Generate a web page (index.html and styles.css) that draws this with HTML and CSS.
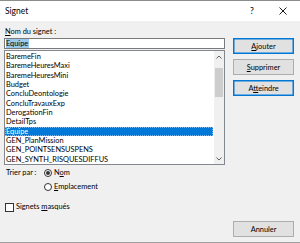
FILE: index.html
```html
<!DOCTYPE html>
<html lang="fr">
<head>
  <meta charset="UTF-8">
  <title>Signet</title>
  <link rel="stylesheet" href="styles.css">
</head>
<body>

  <div class="dialog">
    <div class="titlebar">
      <span class="title">Signet</span>
      <span class="help">?</span>
      <span class="close">
        <svg width="8" height="8" viewBox="0 0 8 8"><path d="M0.5 0.5L7.5 7.5M7.5 0.5L0.5 7.5" stroke="#000" stroke-width="0.9" fill="none"/></svg>
      </span>
    </div>

    <div class="content">
      <!-- Colonne gauche -->
      <div class="main">
        <div class="field-label"><u>N</u>om du signet :</div>
        <div class="name-input"><span class="sel">Equipe</span></div>

        <div class="listbox">
          <ul class="items">
            <li>BaremeFin</li>
            <li>BaremeHeuresMaxi</li>
            <li>BaremeHeuresMini</li>
            <li>Budget</li>
            <li>ConcluDeontologie</li>
            <li>ConcluTravauxExp</li>
            <li>DerogationFin</li>
            <li>DetailTps</li>
            <li class="selected">Equipe</li>
            <li>GEN_PlanMission</li>
            <li>GEN_POINTSENSUSPENS</li>
            <li>GEN_SYNTH_RISQUESDIFFUS</li>
          </ul>
          <div class="scrollbar">
            <span class="arrow">
              <svg width="6" height="4" viewBox="0 0 6 4"><path d="M0.5 3.5L3 1L5.5 3.5" stroke="#606060" stroke-width="1" fill="none"/></svg>
            </span>
            <span class="track"><span class="thumb"></span></span>
            <span class="arrow">
              <svg width="6" height="4" viewBox="0 0 6 4"><path d="M0.5 0.5L3 3L5.5 0.5" stroke="#606060" stroke-width="1" fill="none"/></svg>
            </span>
          </div>
        </div>

        <div class="sort">
          <span class="sort-label">Trier par :</span>
          <div class="radios">
            <div class="radio"><span class="dot checked"></span><span>N<u>o</u>m</span></div>
            <div class="radio"><span class="dot"></span><span><u>E</u>mplacement</span></div>
          </div>
        </div>

        <div class="check"><span class="box"></span><span>Signets <u>m</u>asqués</span></div>
      </div>

      <!-- Boutons -->
      <div class="actions">
        <button class="btn default"><u>A</u>jouter</button>
        <button class="btn"><u>S</u>upprimer</button>
        <button class="btn default">A<u>t</u>teindre</button>
        <button class="btn cancel">Annuler</button>
      </div>
    </div>
  </div>

</body>
</html>
```

FILE: styles.css
```css
* {
  margin: 0;
  padding: 0;
  box-sizing: border-box;
}

body {
  width: 300px;
  height: 243px;
  overflow: hidden;
  background: #f0f0f0;
  font-family: 'Lato', 'Noto Sans', sans-serif;
  font-size: 7.4px;
  color: #000;
}

u {
  text-decoration-thickness: 1px;
  text-underline-offset: 1px;
}

.dialog {
  height: 243px;
  display: flex;
  flex-direction: column;
  border-top: 1px solid #8c8c8c;
  border-bottom: 1px solid #a0a0a0;
}

/* Barre de titre */
.titlebar {
  height: 20px;
  background: #fff;
  display: flex;
  align-items: center;
  padding-left: 5px;
}
.title {
  flex: 1;
  font-size: 8.5px;
}
.help {
  width: 8px;
  font-size: 8.5px;
  margin-right: 23px;
  text-align: center;
}
.close {
  display: flex;
  margin-right: 13px;
}

/* Contenu */
.content {
  flex: 1;
  display: flex;
  padding: 0 6px 5px 4px;
}

.main {
  width: 221px;
  display: flex;
  flex-direction: column;
}

.field-label {
  line-height: 10px;
  margin-top: 6px;
  margin-left: 1px;
}

.name-input {
  height: 11px;
  margin-top: 1px;
  border: 1px solid #7a7a7a;
  background: #fff;
  padding: 0 1px;
  line-height: 9px;
}
.name-input .sel {
  display: inline-block;
  background: #99c9ef;
  padding-right: 1px;
}

.listbox {
  height: 115px;
  margin-top: 1px;
  border: 1px solid #828790;
  background: #fff;
  display: flex;
}
.items {
  flex: 1;
  list-style: none;
  padding-top: 1px;
}
.items li {
  height: 9.33px;
  line-height: 9.33px;
  padding-left: 1px;
  margin-right: 1px;
  white-space: nowrap;
}
.items li.selected {
  background: #0078d7;
  color: #fff;
  outline: 1px dotted #7ab8ee;
  outline-offset: -1px;
}

.scrollbar {
  width: 10px;
  background: #f0f0f0;
  display: flex;
  flex-direction: column;
}
.arrow {
  height: 11px;
  display: flex;
  align-items: center;
  justify-content: center;
}
.track {
  flex: 1;
  padding-top: 6px;
}
.thumb {
  display: block;
  height: 29px;
  margin: 0 1px;
  background: #cdcdcd;
}

/* Tri */
.sort {
  display: flex;
  margin-top: 3px;
  line-height: 10px;
}
.sort-label {
  width: 40px;
  padding-left: 2px;
}
.radios {
  display: flex;
  flex-direction: column;
  gap: 4px;
}
.radio {
  display: flex;
  align-items: center;
}
.dot {
  width: 8px;
  height: 8px;
  border: 1px solid #333;
  border-radius: 50%;
  background: #fff;
  margin-right: 2px;
  display: flex;
  align-items: center;
  justify-content: center;
}
.dot.checked::after {
  content: '';
  width: 4px;
  height: 4px;
  border-radius: 50%;
  background: #333;
}

.check {
  display: flex;
  align-items: center;
  margin-top: 10px;
  line-height: 10px;
  padding-left: 1px;
}
.box {
  width: 9px;
  height: 9px;
  border: 1px solid #333;
  background: #fff;
  margin-right: 2px;
}

/* Boutons */
.actions {
  width: 61px;
  margin-left: 8px;
  display: flex;
  flex-direction: column;
  gap: 5px;
  padding-top: 17px;
}
.btn {
  height: 16px;
  background: #e1e1e1;
  border: 1px solid #adadad;
  font-family: inherit;
  font-size: 7.4px;
  color: #000;
}
.btn.default {
  border-color: #0078d7;
  box-shadow: inset 0 0 0 0.5px #0078d7;
}
.btn.cancel {
  margin-top: auto;
}
```
